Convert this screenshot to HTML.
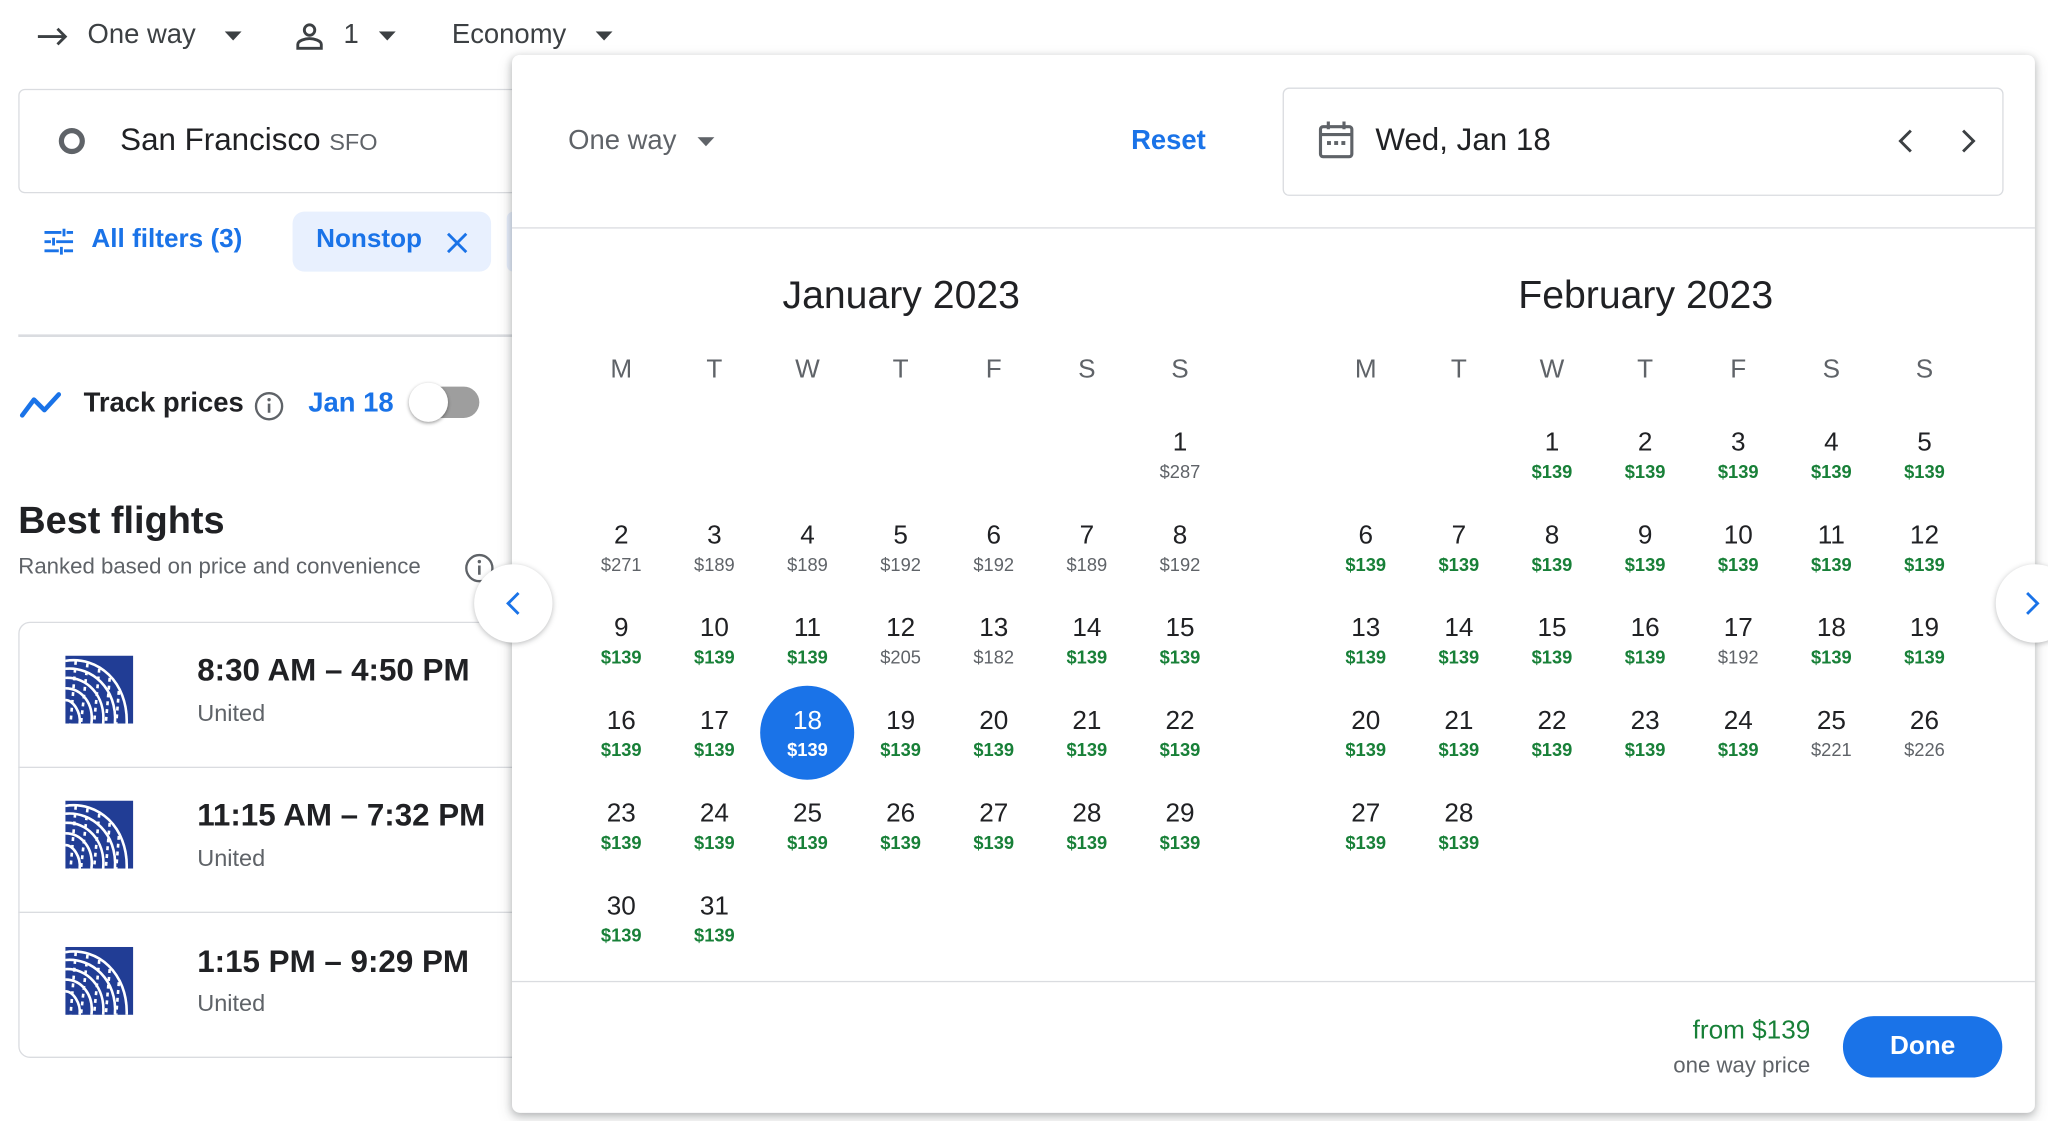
<!DOCTYPE html>
<html><head><meta charset="utf-8">
<style>
html,body{margin:0;padding:0;background:#fff;overflow:hidden}
body{width:2048px;height:1121px;position:relative}
#w{position:absolute;left:0;top:0;width:1568px;height:858px;transform:scale(1.30612);transform-origin:0 0;font-family:"Liberation Sans",Arial,sans-serif;color:#202124}
.a{position:absolute;white-space:nowrap}
.g{color:#5f6368}
.b{color:#1a73e8}
.grid{position:absolute;display:grid;grid-template-columns:repeat(7,71.3px);grid-auto-rows:71px}
.c{text-align:center;position:relative}
.c .n{font-size:20px;line-height:24px;color:#202124;position:relative;z-index:1}
.c .p{font-size:14px;line-height:20px;color:#188038;font-weight:bold;position:relative;z-index:1}
.c .p.x{color:#5f6368;font-weight:normal}
.sel::before{content:"";position:absolute;left:50%;top:-15px;width:72px;height:72px;margin-left:-36px;border-radius:50%;background:#1a73e8}
.sel .n,.sel .p{color:#fff}
.wd{position:absolute;top:272px;display:grid;grid-template-columns:repeat(7,71.3px);font-size:20px;color:#5f6368;text-align:center}
</style></head><body><div id="w">

<!-- top bar -->
<svg class="a" style="left:28px;top:19px" width="26" height="18" viewBox="0 0 26 18"><path d="M1 9H22M16 3L22 9L16 15" stroke="#3c4043" stroke-width="2.2" fill="none"/></svg>
<div class="a" style="left:67px;top:15px;font-size:21px;color:#3c4043">One way</div>
<svg class="a" style="left:172px;top:24px" width="14" height="8"><path d="M0 0H13L6.5 7Z" fill="#3c4043"/></svg>
<svg class="a" style="left:225px;top:16px" width="24" height="24" viewBox="0 0 24 24"><circle cx="12" cy="7" r="4" stroke="#3c4043" stroke-width="2.2" fill="none"/><path d="M3 21V18C3 15 9 13.5 12 13.5S21 15 21 18V21Z" stroke="#3c4043" stroke-width="2.2" fill="none"/></svg>
<div class="a" style="left:263px;top:15px;font-size:21px;color:#3c4043">1</div>
<svg class="a" style="left:290px;top:24px" width="14" height="8"><path d="M0 0H13L6.5 7Z" fill="#3c4043"/></svg>
<div class="a" style="left:346px;top:15px;font-size:21px;color:#3c4043">Economy</div>
<svg class="a" style="left:456px;top:24px" width="14" height="8"><path d="M0 0H13L6.5 7Z" fill="#3c4043"/></svg>

<!-- origin box -->
<div class="a" style="left:14px;top:68px;width:420px;height:80px;border:1px solid #dadce0;border-radius:5px;box-sizing:border-box"></div>
<svg class="a" style="left:44px;top:97px" width="22" height="22"><circle cx="11" cy="11" r="8" stroke="#5f6368" stroke-width="4" fill="none"/></svg>
<div class="a" style="left:92px;top:94px;font-size:24px;color:#202124">San Francisco <span style="font-size:18px;color:#5f6368">SFO</span></div>

<!-- filters -->
<svg class="a" style="left:34px;top:175px" width="22" height="20" viewBox="0 0 22 20"><path d="M0 3H13M17 3H22M15 0V6M0 10H5M9 10H22M7 7V13M0 17H11M15 17H22M13 14V20" stroke="#1a73e8" stroke-width="2.2" fill="none"/></svg>
<div class="a b" style="left:70px;top:172px;font-size:20px;font-weight:bold">All filters (3)</div>
<div class="a" style="left:224px;top:162px;width:152px;height:46px;background:#e8f0fe;border-radius:9px"></div>
<div class="a b" style="left:242px;top:172px;font-size:20px;font-weight:bold">Nonstop</div>
<svg class="a" style="left:342px;top:178px" width="16" height="16"><path d="M1 1L15 15M15 1L1 15" stroke="#1a73e8" stroke-width="2.2"/></svg>
<div class="a" style="left:388px;top:162px;width:10px;height:46px;background:#e8f0fe;border-radius:9px"></div>

<div class="a" style="left:14px;top:256px;width:400px;height:2px;background:#dadce0"></div>

<!-- track prices -->
<svg class="a" style="left:14px;top:298px" width="35" height="24" viewBox="0 0 35 24"><path d="M3 20L12 8L20 16L31 4" stroke="#1a73e8" stroke-width="3.5" fill="none" stroke-linecap="round" stroke-linejoin="round"/></svg>
<div class="a" style="left:64px;top:297px;font-size:21px;font-weight:bold;color:#202124">Track prices</div>
<svg class="a" style="left:194px;top:299px" width="24" height="24"><circle cx="12" cy="12" r="10" stroke="#5f6368" stroke-width="1.8" fill="none"/><path d="M12 10V17" stroke="#5f6368" stroke-width="2"/><circle cx="12" cy="7" r="1.3" fill="#5f6368"/></svg>
<div class="a b" style="left:236px;top:297px;font-size:21px;font-weight:bold">Jan 18</div>
<div class="a" style="left:327px;top:296px;width:40px;height:24px;border-radius:12px;background:#9e9e9e"></div>
<div class="a" style="left:313px;top:293px;width:30px;height:30px;border-radius:50%;background:#fff;box-shadow:0 1px 3px rgba(0,0,0,.4)"></div>

<div class="a" style="left:14px;top:383px;font-size:29px;font-weight:bold;color:#202124">Best flights</div>
<div class="a g" style="left:14px;top:424px;font-size:17px">Ranked based on price and convenience</div>
<svg class="a" style="left:355px;top:423px" width="24" height="24"><circle cx="12" cy="12" r="10" stroke="#5f6368" stroke-width="1.8" fill="none"/><path d="M12 10V17" stroke="#5f6368" stroke-width="2"/><circle cx="12" cy="7" r="1.3" fill="#5f6368"/></svg>

<!-- flights card -->
<div class="a" style="left:14px;top:476px;width:420px;height:334px;border:1px solid #dadce0;border-radius:9px;box-sizing:border-box"></div>
<div class="a" style="left:14px;top:587px;width:400px;height:1px;background:#dadce0"></div>
<div class="a" style="left:14px;top:698px;width:400px;height:1px;background:#dadce0"></div>

<svg width="0" height="0" style="position:absolute"><defs><g id="ual"><rect width="52" height="52" fill="#213d95"/><g stroke="#fff" stroke-width="2" fill="none"><path d="M0 4C25 0 48 20 47 52"/><path d="M0 10C20 8 40 25 38 52"/><path d="M0 17C16 16 31 30 29 52"/><path d="M0 25C12 25 22 36 20 52"/><path d="M0 34C6 34 12 43 11 52"/><path d="M8 4L4 52M17 6L12 52M26 10L22 52M34 17L31 52M41 27L39 52" stroke-dasharray="3 3"/></g></g></defs></svg>
<svg class="a" style="left:50px;top:502px" width="52" height="52"><use href="#ual"/></svg>
<svg class="a" style="left:50px;top:613px" width="52" height="52"><use href="#ual"/></svg>
<svg class="a" style="left:50px;top:725px" width="52" height="52"><use href="#ual"/></svg>
<div class="a" style="left:151px;top:500px;font-size:24px;font-weight:bold">8:30 AM – 4:50 PM</div>
<div class="a g" style="left:151px;top:536px;font-size:18px">United</div>
<div class="a" style="left:151px;top:611px;font-size:24px;font-weight:bold">11:15 AM – 7:32 PM</div>
<div class="a g" style="left:151px;top:647px;font-size:18px">United</div>
<div class="a" style="left:151px;top:723px;font-size:24px;font-weight:bold">1:15 PM – 9:29 PM</div>
<div class="a g" style="left:151px;top:758px;font-size:18px">United</div>

<!-- popup -->
<div class="a" style="left:392px;top:42px;width:1166px;height:810px;background:#fff;border-radius:6px;box-shadow:0 2px 6px rgba(60,64,67,.3),0 4px 12px rgba(60,64,67,.15)"></div>
<div class="a" style="left:435px;top:96px;font-size:21px;color:#5f6368">One way</div>
<svg class="a" style="left:534px;top:105px" width="14" height="8"><path d="M0 0H13L6.5 7Z" fill="#5f6368"/></svg>
<div class="a b" style="left:866px;top:96px;font-size:21px;font-weight:bold">Reset</div>
<div class="a" style="left:982px;top:67px;width:552px;height:83px;border:1px solid #dadce0;border-radius:5px;box-sizing:border-box"></div>
<svg class="a" style="left:1009px;top:92px" width="28" height="30" viewBox="0 0 28 30"><rect x="2" y="5" width="24" height="23" rx="2" stroke="#5f6368" stroke-width="2.4" fill="none"/><path d="M2 11H26M8 1V7M20 1V7" stroke="#5f6368" stroke-width="2.4"/><rect x="7" y="16" width="3" height="3" fill="#5f6368"/><rect x="12.5" y="16" width="3" height="3" fill="#5f6368"/><rect x="18" y="16" width="3" height="3" fill="#5f6368"/></svg>
<div class="a" style="left:1053px;top:94px;font-size:24px;color:#202124">Wed, Jan 18</div>
<svg class="a" style="left:1452px;top:98px" width="14" height="20"><path d="M11 2L3 10L11 18" stroke="#3c4043" stroke-width="2.2" fill="none"/></svg>
<svg class="a" style="left:1500px;top:98px" width="14" height="20"><path d="M3 2L11 10L3 18" stroke="#3c4043" stroke-width="2.2" fill="none"/></svg>
<div class="a" style="left:392px;top:174px;width:1166px;height:1px;background:#dadce0"></div>

<div class="a" style="left:540px;top:210px;width:300px;text-align:center;font-size:30px">January 2023</div>
<div class="a" style="left:1110px;top:210px;width:300px;text-align:center;font-size:30px">February 2023</div>
<div class="wd" style="left:440px"><div>M</div><div>T</div><div>W</div><div>T</div><div>F</div><div>S</div><div>S</div></div>
<div class="wd" style="left:1010px"><div>M</div><div>T</div><div>W</div><div>T</div><div>F</div><div>S</div><div>S</div></div>

<div class="grid" style="left:440px;top:327px">
<div></div><div></div><div></div><div></div><div></div><div></div>
<div class="c"><div class="n">1</div><div class="p x">$287</div></div>
<div class="c"><div class="n">2</div><div class="p x">$271</div></div>
<div class="c"><div class="n">3</div><div class="p x">$189</div></div>
<div class="c"><div class="n">4</div><div class="p x">$189</div></div>
<div class="c"><div class="n">5</div><div class="p x">$192</div></div>
<div class="c"><div class="n">6</div><div class="p x">$192</div></div>
<div class="c"><div class="n">7</div><div class="p x">$189</div></div>
<div class="c"><div class="n">8</div><div class="p x">$192</div></div>
<div class="c"><div class="n">9</div><div class="p">$139</div></div>
<div class="c"><div class="n">10</div><div class="p">$139</div></div>
<div class="c"><div class="n">11</div><div class="p">$139</div></div>
<div class="c"><div class="n">12</div><div class="p x">$205</div></div>
<div class="c"><div class="n">13</div><div class="p x">$182</div></div>
<div class="c"><div class="n">14</div><div class="p">$139</div></div>
<div class="c"><div class="n">15</div><div class="p">$139</div></div>
<div class="c"><div class="n">16</div><div class="p">$139</div></div>
<div class="c"><div class="n">17</div><div class="p">$139</div></div>
<div class="c sel"><div class="n">18</div><div class="p">$139</div></div>
<div class="c"><div class="n">19</div><div class="p">$139</div></div>
<div class="c"><div class="n">20</div><div class="p">$139</div></div>
<div class="c"><div class="n">21</div><div class="p">$139</div></div>
<div class="c"><div class="n">22</div><div class="p">$139</div></div>
<div class="c"><div class="n">23</div><div class="p">$139</div></div>
<div class="c"><div class="n">24</div><div class="p">$139</div></div>
<div class="c"><div class="n">25</div><div class="p">$139</div></div>
<div class="c"><div class="n">26</div><div class="p">$139</div></div>
<div class="c"><div class="n">27</div><div class="p">$139</div></div>
<div class="c"><div class="n">28</div><div class="p">$139</div></div>
<div class="c"><div class="n">29</div><div class="p">$139</div></div>
<div class="c"><div class="n">30</div><div class="p">$139</div></div>
<div class="c"><div class="n">31</div><div class="p">$139</div></div>
</div>

<div class="grid" style="left:1010px;top:327px">
<div></div><div></div>
<div class="c"><div class="n">1</div><div class="p">$139</div></div>
<div class="c"><div class="n">2</div><div class="p">$139</div></div>
<div class="c"><div class="n">3</div><div class="p">$139</div></div>
<div class="c"><div class="n">4</div><div class="p">$139</div></div>
<div class="c"><div class="n">5</div><div class="p">$139</div></div>
<div class="c"><div class="n">6</div><div class="p">$139</div></div>
<div class="c"><div class="n">7</div><div class="p">$139</div></div>
<div class="c"><div class="n">8</div><div class="p">$139</div></div>
<div class="c"><div class="n">9</div><div class="p">$139</div></div>
<div class="c"><div class="n">10</div><div class="p">$139</div></div>
<div class="c"><div class="n">11</div><div class="p">$139</div></div>
<div class="c"><div class="n">12</div><div class="p">$139</div></div>
<div class="c"><div class="n">13</div><div class="p">$139</div></div>
<div class="c"><div class="n">14</div><div class="p">$139</div></div>
<div class="c"><div class="n">15</div><div class="p">$139</div></div>
<div class="c"><div class="n">16</div><div class="p">$139</div></div>
<div class="c"><div class="n">17</div><div class="p x">$192</div></div>
<div class="c"><div class="n">18</div><div class="p">$139</div></div>
<div class="c"><div class="n">19</div><div class="p">$139</div></div>
<div class="c"><div class="n">20</div><div class="p">$139</div></div>
<div class="c"><div class="n">21</div><div class="p">$139</div></div>
<div class="c"><div class="n">22</div><div class="p">$139</div></div>
<div class="c"><div class="n">23</div><div class="p">$139</div></div>
<div class="c"><div class="n">24</div><div class="p">$139</div></div>
<div class="c"><div class="n">25</div><div class="p x">$221</div></div>
<div class="c"><div class="n">26</div><div class="p x">$226</div></div>
<div class="c"><div class="n">27</div><div class="p">$139</div></div>
<div class="c"><div class="n">28</div><div class="p">$139</div></div>
</div>

<!-- nav circles -->
<div class="a" style="left:363px;top:432px;width:60px;height:60px;border-radius:50%;background:#fff;box-shadow:0 1px 4px rgba(60,64,67,.35)"></div>
<svg class="a" style="left:386px;top:452px" width="14" height="20"><path d="M11 2L3 10L11 18" stroke="#1a73e8" stroke-width="2.2" fill="none"/></svg>
<div class="a" style="left:1528px;top:432px;width:60px;height:60px;border-radius:50%;background:#fff;box-shadow:0 1px 4px rgba(60,64,67,.35)"></div>
<svg class="a" style="left:1549px;top:452px" width="14" height="20"><path d="M3 2L11 10L3 18" stroke="#1a73e8" stroke-width="2.2" fill="none"/></svg>

<!-- footer -->
<div class="a" style="left:392px;top:751px;width:1166px;height:1px;background:#dadce0"></div>
<div class="a" style="right:182px;top:778px;font-size:20px;color:#188038;text-align:right">from $139</div>
<div class="a g" style="right:182px;top:806px;font-size:17px;text-align:right">one way price</div>
<div class="a" style="left:1411px;top:778px;width:122px;height:47px;border-radius:24px;background:#1a73e8;color:#fff;font-size:20px;font-weight:bold;text-align:center;line-height:47px">Done</div>

</div></body></html>
